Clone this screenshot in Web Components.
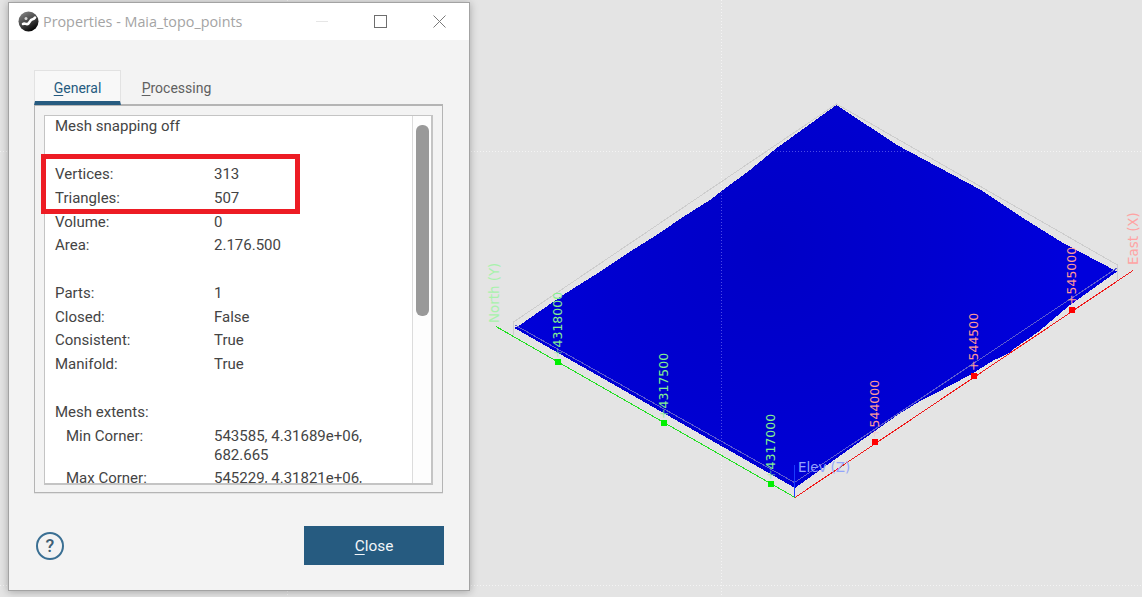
<!DOCTYPE html>
<html>
<head>
<meta charset="utf-8">
<title>Properties - Maia_topo_points</title>
<style>
    html, body { margin: 0; height: 100%; background: #e4e4e4; overflow: hidden; }
    body { position: relative; font-family: Roboto, "Liberation Sans", sans-serif; }
</style>
</head>
<body>

<scene-view></scene-view>

<prop-window heading="Properties - Maia_topo_points">
    <tab-bar></tab-bar>
    <prop-panel>
        <prop-row>Mesh snapping off</prop-row>
        <prop-row></prop-row>
        <prop-row label="Vertices:">313</prop-row>
        <prop-row label="Triangles:">507</prop-row>
        <prop-row label="Volume:">0</prop-row>
        <prop-row label="Area:">2.176.500</prop-row>
        <prop-row></prop-row>
        <prop-row label="Parts:">1</prop-row>
        <prop-row label="Closed:">False</prop-row>
        <prop-row label="Consistent:">True</prop-row>
        <prop-row label="Manifold:">True</prop-row>
        <prop-row></prop-row>
        <prop-row>Mesh extents:</prop-row>
        <prop-row label="Min Corner:" indent>543585, 4.31689e+06, 682.665</prop-row>
        <prop-row label="Max Corner:" indent>545229, 4.31821e+06, 683.12</prop-row>
    </prop-panel>
    <dialog-footer slot="footer"></dialog-footer>
</prop-window>

<script>
const MESH_OUTLINE = '514.5,328 520,325 563,295 600,271.7 630,251.7 656.7,235 683,217 710,200 723,190 750,170 776.7,148 ' +
    '836.5,105 897,145 910,152 980,189.5 1023,218 1063,243 1117,271.5 1070,305 1038,332 1015,348 1010,352.5 993,360.7 ' +
    '970,375 943,389.3 923,399.3 900,413.3 880,427.3 795,488';

class SceneView extends HTMLElement {
    constructor() {
        super();
        this.attachShadow({ mode: 'open' });

        const tick = (x, y, fill) => `<rect x="${x - 3}" y="${y - 3}" width="6" height="6" fill="${fill}"/>`;
        // plus is the tick mark of the axis, some of them nearly vanish against the mesh edge
        const label = (x, y, text, cls, plus) =>
            `<text class="${cls}" x="${x}" y="${y}" transform="rotate(-90 ${x} ${y})"><tspan fill-opacity="${plus}">+</tspan>${text}</text>`;
        const axisName = (x, y, text, cls) =>
            `<text class="axis ${cls}" x="${x}" y="${y}" transform="rotate(-90 ${x} ${y})">${text}</text>`;

        this.shadowRoot.innerHTML = `
            <style>
                :host { position: absolute; inset: 0; display: block; }
                svg { display: block; width: 100%; height: 100%; }
                text { font-family: "DejaVu Sans", sans-serif; font-size: 12.5px; }
                .axis { font-size: 13.4px; }
                .g { fill: #84f08f; }
                .r { fill: #ff9a96; }
                .gp { fill: #a8f2ac; }
                .rp { fill: #ffa3a3; }
                .bp { fill: #93a4fb; }
                .grid { stroke: #f4f4f4; stroke-dasharray: 1 2; fill: none; }
                .grid-mesh { stroke: #4a4ae6; stroke-dasharray: 1 2; fill: none; }
                .line { fill: none; shape-rendering: crispEdges; }
            </style>
            <svg viewBox="0 0 1142 597" xmlns="http://www.w3.org/2000/svg">
                <defs>
                    <radialGradient id="shade" gradientUnits="userSpaceOnUse" cx="770" cy="250" r="300">
                        <stop offset="0" stop-color="#0000c6"/>
                        <stop offset="0.55" stop-color="#0000d0"/>
                        <stop offset="1" stop-color="#0000dc"/>
                    </radialGradient>
                    <clipPath id="mesh-clip">
                        <polygon points="${MESH_OUTLINE}"/>
                    </clipPath>
                </defs>

                <path class="grid" d="M0 151.5H1142M0 585.5H1142M287.5 0V597M721.5 0V597"/>

                <!-- bounding box behind the mesh -->
                <path class="line" d="M513.5 335V322L836.5 104L1117.5 265V280" stroke="#cdcdcd"/>

                <polygon points="${MESH_OUTLINE}" fill="url(#shade)" shape-rendering="crispEdges"/>
                <g clip-path="url(#mesh-clip)">
                    <path class="grid-mesh" d="M0 151.5H1142M721.5 0V597"/>
                </g>

                <!-- front edges of the box, over the mesh -->
                <path class="line" d="M515 325L794.5 482.5L1117 268" stroke="#5d5dcf"/>

                <!-- axes -->
                <path class="line" d="M496 326.5L795 497.5" stroke="#22e022"/>
                <path class="line" d="M795 497.5L1133 270.5" stroke="#f01818"/>
                <path class="line" d="M794.5 465V497" stroke="#1a3cff"/>

                ${tick(558, 362, '#00f000')}
                ${tick(664, 423, '#00f000')}
                ${tick(771, 484, '#00f000')}
                ${tick(875, 442, '#ff0000')}
                ${tick(974, 376, '#ff0000')}
                ${tick(1072, 310, '#ff0000')}

                ${label(562, 358, '4318000', 'g', 0.6)}
                ${label(668, 419, '4317500', 'g', 0.8)}
                ${label(775, 480, '4317000', 'g', 0.6)}
                ${label(879, 438, '544000', 'r', 0.3)}
                ${label(978, 371, '544500', 'r', 1)}
                ${label(1076, 305, '545000', 'r', 1)}
                ${axisName(499, 323, 'North (Y)', 'gp')}
                ${axisName(1138, 265, 'East (X)', 'rp')}
                <text class="axis bp" x="798" y="472">Elev (Z)</text>
            </svg>
        `;
    }
}

class PropWindow extends HTMLElement {
    constructor() {
        super();
        const heading = this.getAttribute('heading') || '';
        this.attachShadow({ mode: 'open' });
        this.shadowRoot.innerHTML = `
            <style>
                :host {
                    position: absolute;
                    left: 8px;
                    top: 2px;
                    width: 462px;
                    height: 589px;
                    box-sizing: border-box;
                    display: flex;
                    flex-direction: column;
                    background: #f3f3f3;
                    border: 1px solid #a3a3a3;
                    box-shadow: 0 1px 8px rgba(0, 0, 0, .28);
                }
                .title {
                    height: 37px;
                    flex: none;
                    background: #fff;
                    display: flex;
                    align-items: center;
                    padding: 0 0 0 9px;
                    color: #a4a4a4;
                    font: 14.35px "Open Sans", sans-serif;
                }
                .title svg.logo { margin-right: 4px; flex: none; }
                .caption { flex: 1; white-space: nowrap; }
                .controls { display: flex; align-items: center; margin-right: 23px; }
                .controls svg { display: block; }
                .controls svg + svg { margin-left: 46px; }
                .body { flex: 1; padding: 30px 25px 0 25px; display: flex; flex-direction: column; }
            </style>
            <div class="title">
                <svg class="logo" width="21" height="21" viewBox="0 0 21 21">
                    <defs>
                        <linearGradient id="badge" x1="0.2" y1="0.1" x2="0.7" y2="1">
                            <stop offset="0" stop-color="#7a7a7a"/>
                            <stop offset="0.55" stop-color="#3c3c3c"/>
                            <stop offset="1" stop-color="#000"/>
                        </linearGradient>
                    </defs>
                    <circle cx="10.5" cy="10.5" r="10" fill="url(#badge)"/>
                    <path d="M5 13C7 11.5 8.5 14.5 10.5 12.5L13 9C14.5 7.5 15.5 9 17 6.5" fill="none" stroke="#fff" stroke-width="2.6" stroke-linecap="round"/>
                    <circle cx="8" cy="7.5" r="1.5" fill="#d8d8d8"/>
                </svg>
                <span class="caption">${heading}</span>
                <div class="controls">
                    <svg width="12" height="12" viewBox="0 0 12 12"><path d="M0 5.5H12" stroke="#e6e6e6"/></svg>
                    <svg width="13" height="13" viewBox="0 0 13 13"><rect x=".5" y=".5" width="12" height="12" fill="none" stroke="#6e6e6e"/></svg>
                    <svg width="13" height="13" viewBox="0 0 13 13"><path d="M.5 .5L12.5 12.5M12.5 .5L.5 12.5" fill="none" stroke="#7a7a7a"/></svg>
                </div>
            </div>
            <div class="body">
                <slot></slot>
                <slot name="footer"></slot>
            </div>
        `;
    }
}

class TabBar extends HTMLElement {
    constructor() {
        super();
        this.attachShadow({ mode: 'open' });
        this.shadowRoot.innerHTML = `
            <style>
                :host { display: flex; height: 35px; flex: none; font-size: 14px; position: relative; z-index: 1; }
                .tab { box-sizing: border-box; height: 35px; display: flex; align-items: center; justify-content: center; }
                .on {
                    width: 87px;
                    background: #f8f8f8;
                    color: #265b80;
                    border: 1px solid #e2e2e2;
                    border-bottom: 4px solid #265b80;
                    padding-top: 3px;
                }
                .off { width: 111px; color: #606060; padding-top: 1px; }
                u { text-underline-offset: 2px; }
            </style>
            <div class="tab on"><span><u>G</u>eneral</span></div>
            <div class="tab off"><span><u>P</u>rocessing</span></div>
        `;
    }
}

class PropPanel extends HTMLElement {
    constructor() {
        super();
        this.attachShadow({ mode: 'open' });
        this.shadowRoot.innerHTML = `
            <style>
                :host {
                    display: block;
                    flex: none;
                    box-sizing: border-box;
                    height: 389px;
                    width: 409px;
                    margin-top: -1px;
                    padding: 9px 9px 7px;
                    border: 1px solid #b4b4b4;
                    border-top-width: 2px;
                    box-shadow: 0 1px 0 #e2e2e2;
                }
                .frame {
                    position: relative;
                    box-sizing: border-box;
                    height: 100%;
                    display: flex;
                    background: #fff;
                    border: 1px solid #c4c4c4;
                    border-right-width: 2px;
                    border-bottom-width: 2px;
                }
                .list {
                    flex: 1;
                    min-width: 0;
                    height: 100%;
                    overflow: hidden;
                    padding: 0 0 0 10px;
                    box-sizing: border-box;
                    color: #444;
                    font-size: 15px;
                }
                .rows { margin-top: -1px; }
                .bar {
                    flex: none;
                    box-sizing: border-box;
                    width: 19px;
                    border-left: 1px solid #dcdcdc;
                    background: #fdfdfd;
                    padding: 9px 3px 0 3px;
                }
                .thumb { height: 191px; width: 13px; background: #999; border-radius: 6px; }
                .mark {
                    position: absolute;
                    left: -4px;
                    top: 38px;
                    width: 259px;
                    height: 60px;
                    box-sizing: border-box;
                    border: 5px solid #ed1c24;
                }
            </style>
            <div class="frame">
                <div class="list"><div class="rows"><slot></slot></div></div>
                <div class="bar"><div class="thumb"></div></div>
                <div class="mark"></div>
            </div>
        `;
    }
}

class PropRow extends HTMLElement {
    constructor() {
        super();
        const name = this.getAttribute('label');
        const indent = this.hasAttribute('indent') ? 11 : 0;
        this.attachShadow({ mode: 'open' });
        this.shadowRoot.innerHTML = `
            <style>
                :host { display: flex; min-height: 19px; padding: 2.4px 0; line-height: 19px; }
                .name { width: ${159 - indent}px; margin-left: ${indent}px; flex: none; }
                .value { width: 178px; }
                .full { white-space: nowrap; }
            </style>
            ${name !== null
                ? `<div class="name">${name}</div><div class="value"><slot></slot></div>`
                : `<div class="full"><slot></slot></div>`}
        `;
    }
}

class DialogFooter extends HTMLElement {
    constructor() {
        super();
        this.attachShadow({ mode: 'open' });
        this.shadowRoot.innerHTML = `
            <style>
                :host {
                    display: flex;
                    align-items: center;
                    justify-content: space-between;
                    margin-top: 33px;
                    width: 410px;
                }
                .help {
                    box-sizing: border-box;
                    width: 28px;
                    height: 28px;
                    margin-left: 2px;
                    border: 2px solid #3a6f93;
                    border-radius: 50%;
                    color: #3f5f75;
                    display: flex;
                    align-items: center;
                    justify-content: center;
                    font: 500 18px Roboto, sans-serif;
                }
                .close {
                    width: 140px;
                    height: 39px;
                    background: #265b80;
                    color: #f2f6f9;
                    display: flex;
                    align-items: center;
                    justify-content: center;
                    font-size: 15.4px;
                }
                u { text-underline-offset: 3px; }
            </style>
            <div class="help">?</div>
            <div class="close"><span><u>C</u>lose</span></div>
        `;
    }
}

customElements.define('scene-view', SceneView);
customElements.define('prop-window', PropWindow);
customElements.define('tab-bar', TabBar);
customElements.define('prop-panel', PropPanel);
customElements.define('prop-row', PropRow);
customElements.define('dialog-footer', DialogFooter);
</script>
</body>
</html>
